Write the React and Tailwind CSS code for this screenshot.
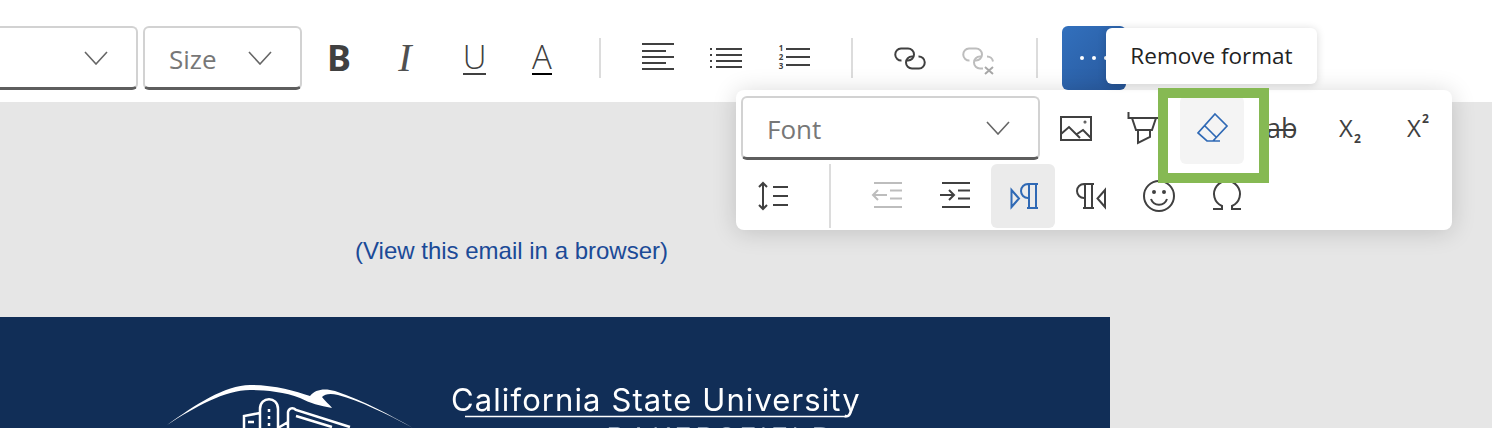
import React from "react";

const Icon = ({ children, className = "text-[#404040]", sw = "2" }) => (
  <svg
    width="32"
    height="32"
    viewBox="0 0 32 32"
    fill="none"
    stroke="currentColor"
    strokeWidth={sw}
    className={`overflow-visible ${className}`}
  >
    {children}
  </svg>
);

const Chevron = () => (
  <svg width="24" height="14" viewBox="0 0 24 14" fill="none" stroke="#666666" strokeWidth="1.6">
    <path d="M1 1l11 12L23 1" />
  </svg>
);

const Select = ({ label, className }) => (
  <div
    className={`flex h-16 items-center justify-between rounded-md border-2 border-b-[3px] border-[#d2d2d2] border-b-[#5e5e5e] text-[26px] text-[#777777] ${className}`}
  >
    <span className="pt-1">{label}</span>
    <Chevron />
  </div>
);

const Cell = ({ children, active, hover }) => (
  <div className="flex h-16 w-[68px] items-start justify-center">
    <div
      className={`flex w-16 items-center justify-center rounded-md ${active ? "bg-[#ebebeb]" : ""} ${hover ? "h-[68px] bg-[#f4f4f4] pb-1" : "h-16"}`}
    >
      {children}
    </div>
  </div>
);

const Sep = ({ className }) => <div className={`w-0.5 bg-[#dcdcdc] ${className}`} />;

const Pilcrow = ({ flip }) =>
  flip ? (
    <>
      <path d="M19 4H9a7 7 0 0 0 0 14h1M10 4v24M17 4v24M8 28h11" />
      <path d="M30 10l-7.500 8.500L30 27z" />
    </>
  ) : (
    <>
      <path d="M31 4H21a7 7 0 0 0 0 14h1M22 4v24M29 4v24M20 28h11" />
      <path d="M4.500 10l7.500 8.500L4.500 27z" />
    </>
  );

export default function App() {
  return (
    <div className="relative h-[428px] overflow-hidden bg-[#e6e6e6] font-['Open_Sans',sans-serif]">
      {/* toolbar */}
      <div className="flex h-[102px] items-start bg-white pt-[26px]">
        <Select label="" className="-ml-2.5 w-[148px] pl-3 pr-[28px]" />
        <Select label="Size" className="ml-[5px] w-[159px] pl-6 pr-[28px]" />
        <div className="ml-[3px] flex">
          <Cell>
            <span className="text-[36px] leading-none font-bold text-[#404040] font-['Noto_Sans',sans-serif]">B</span>
          </Cell>
          <Cell>
            <span className="-ml-1 text-[40px] leading-none italic text-[#505050] font-['Liberation_Serif',serif]">I</span>
          </Cell>
          <Cell>
            <span className="-ml-px border-b-2 border-[#404040] text-[33px] leading-[32px] font-light text-[#404040]">U</span>
          </Cell>
          <Cell>
            <span className="-ml-0.5 border-b-2 border-black text-[33px] leading-[32px] font-light text-[#404040]">A</span>
          </Cell>
        </div>
        <div className="-ml-px flex items-start">
          <Sep className="mx-[23px] mt-3 h-10" />
          <div className="flex">
            <Cell>
              <Icon>
                <path d="M0 2h32M0 9h24M0 15h32M0 21h24M0 27h32" />
              </Icon>
            </Cell>
            <Cell>
              <Icon>
                <path d="M6 7h26M6 13h26M6 19h26M6 25h26M0 7h2M0 13h2M0 19h2M0 25h2" />
              </Icon>
            </Cell>
            <Cell>
              <Icon>
                <path d="M8 7h24M8 15h24M8 23h24" />
                <g fill="currentColor" stroke="none" fontSize="8" fontWeight="700" textAnchor="middle">
                  <text x="3" y="9">1</text>
                  <text x="3" y="18">2</text>
                  <text x="3" y="27">3</text>
                </g>
              </Icon>
            </Cell>
          </div>
          <Sep className="mx-[23px] mt-3 h-10" />
          <div className="flex">
            <Cell>
              <Icon>
                <path d="M7.500 18.500A6 6 0 0 1 7 6.500h7a6 6 0 0 1 0 12h-2" />
                <path d="M24.500 14.500a6 6 0 0 1 .5 12h-7a6 6 0 0 1 0-12h2" />
              </Icon>
            </Cell>
            <Cell>
              <Icon className="text-[#bdbdbd]">
                <path d="M7.500 18.500A6 6 0 0 1 7 6.500h7a6 6 0 0 1 0 12h-2" />
                <path d="M25 14.500a6 6 0 0 1 6 5M21 26.500h-3a6 6 0 0 1 0-12h2" />
                <path d="M23 25l8 7M31 25l-8 7" className="text-[#a8a8a8]" />
              </Icon>
            </Cell>
          </div>
          <Sep className="mx-[24px] mt-3 h-10" />
          <div className="flex h-16 w-16 items-center gap-2 rounded-md bg-gradient-to-br from-[#3270bd] to-[#28589c] pl-[18px]">
            <span className="h-1 w-1 rounded-full bg-white" />
            <span className="h-1 w-1 rounded-full bg-white" />
            <span className="h-1 w-1 rounded-full bg-white" />
          </div>
        </div>
      </div>

      {/* email body */}
      <div className="h-[215px] pl-[355px] pt-[135px]">
        <span className="text-[24px] leading-[28px] text-[#1b4a97] font-['Liberation_Sans',sans-serif]">
          (View this email in a browser)
        </span>
      </div>
      <div className="flex h-[111px] w-[1110px] items-start bg-[#112e57] pl-[160px] pt-[68px] blur-[0.4px]">
        <svg width="260" height="43" viewBox="0 0 260 43" fill="white" className="shrink-0 overflow-visible">
          <path d="M7 40C35 20 65 0 90 0c25 0 45 6 60 11 5-7 15-8 25-5 30 10 55 24 78 37-28-15-53-27-75-33-8-2-13-1-16 2 3 4 8 8 10 11-12-2-22-5-32-10-15-6-35-8-50-8-25 0-55 17-83 35z" />
          <path
            d="M100 43V24c0-13 18-13 18 0v19M84 43V31l16-3M109 24v3M109 31v3M109 38v3M88 37h6M128 43V27c1-4 5-5 8-2l54 17M136 31l36 11M118 43l10-6"
            fill="none"
            stroke="white"
            strokeWidth="2.500"
          />
        </svg>
        <div className="ml-[31px] w-[410px] text-white">
          <div className="text-[31px] leading-[30px] whitespace-nowrap font-['Inter',sans-serif] tracking-[1.1px]">
            California State University
          </div>
          <svg width="410" height="6" viewBox="0 0 410 6" fill="none" stroke="white" className="block overflow-visible">
            <path d="M14 1.500H394c3 0 4-1 5-3l5-12" strokeWidth="1.600" />
          </svg>
          <div className="mt-0.5 pl-[155px] text-[30px] leading-[30px] font-light tracking-[3px] whitespace-nowrap font-['Inter',sans-serif] text-[#8ea0b8]">
            BAKERSFIELD
          </div>
        </div>
      </div>

      {/* overflow popover */}
      <div className="absolute left-[736px] top-[90px] h-[140px] w-[716px] rounded-lg bg-white shadow-[0_2px_24px_rgba(0,0,0,0.16)]">
        <div className="flex h-[68px] items-start pl-[5px] pt-[6px]">
          <Select label="Font" className="w-[299px] pl-6 pr-[28px]" />
          <div className="ml-[2px] flex">
            <Cell>
              <Icon>
                <path d="M1 5h30v23H1zM1 22l8-7 11 11M17 22l6-4 8 8" />
                <circle cx="25" cy="10" r="0.500" />
              </Icon>
            </Cell>
            <Cell>
              <Icon>
                <path d="M.5 0v6H30M4 6l4 12h16l4-12M10 18v13l12-6v-7" />
              </Icon>
            </Cell>
            <Cell hover>
              <Icon className="text-[#2f69b5]" sw="1.700">
                <path d="M19 2l12 12-14 15h-6l-9-8zM8 13l12 12M11 29h13" />
              </Icon>
            </Cell>
            <Cell>
              <Icon>
                <text x="2" y="26" fontSize="27" fill="currentColor" stroke="none" fontFamily="Open Sans, sans-serif">ab</text>
                <path d="M-2 18h34" />
              </Icon>
            </Cell>
            <Cell>
              <span className="relative -ml-1 text-[24px] leading-none text-[#404040]">
                X<span className="absolute -right-[8px] top-[17px] text-[12px] font-bold">2</span>
              </span>
            </Cell>
            <Cell>
              <span className="relative -ml-1 text-[24px] leading-none text-[#404040]">
                X<span className="absolute -right-[8px] -top-[3px] text-[12px] font-bold">2</span>
              </span>
            </Cell>
          </div>
        </div>
        <div className="mt-1.5 flex items-start pl-[3px]">
          <Cell>
            <Icon>
              <path d="M16 7h15M16 16h15M16 25h15M6 3v26M2 7l4-4 4 4M2 25l4 4 4-4" />
            </Icon>
          </Cell>
          <Sep className="mx-[22px] h-16" />
          <Cell>
            <Icon className="text-[#bdbdbd]">
              <path d="M3 3h28M3 27h28M19 10.500h12M19 18.500h12M2 15h14M7 10l-5 5 5 5" />
            </Icon>
          </Cell>
          <Cell>
            <Icon>
              <path d="M3 3h28M3 27h28M19 10.500h12M19 18.500h12M1 15h14M10 10l5 5-5 5" />
            </Icon>
          </Cell>
          <Cell active>
            <Icon className="text-[#2f69b5]">
              <Pilcrow />
            </Icon>
          </Cell>
          <Cell>
            <Icon>
              <Pilcrow flip />
            </Icon>
          </Cell>
          <Cell>
            <Icon>
              <circle cx="16" cy="16" r="15" />
              <path d="M8 19a8.500 8.500 0 0 0 16 0" />
              <circle cx="11" cy="12" r="1" fill="currentColor" />
              <circle cx="21" cy="12" r="1" fill="currentColor" />
            </Icon>
          </Cell>
          <Cell>
            <Icon>
              <path d="M2 29h9v-3a13 13 0 1 1 10 0v3h9" />
            </Icon>
          </Cell>
        </div>
      </div>

      {/* tooltip */}
      <div className="absolute left-[1106px] top-[28px] flex h-14 w-[211px] items-center justify-center rounded-md bg-white text-[22.5px] text-[#222222] shadow-[0_1px_8px_rgba(0,0,0,0.16)]">
        Remove format
      </div>

      {/* green callout */}
      <div className="absolute left-[1158px] top-[88px] h-[95px] w-[111px] border-[10px] border-[#86b953]" />
    </div>
  );
}
